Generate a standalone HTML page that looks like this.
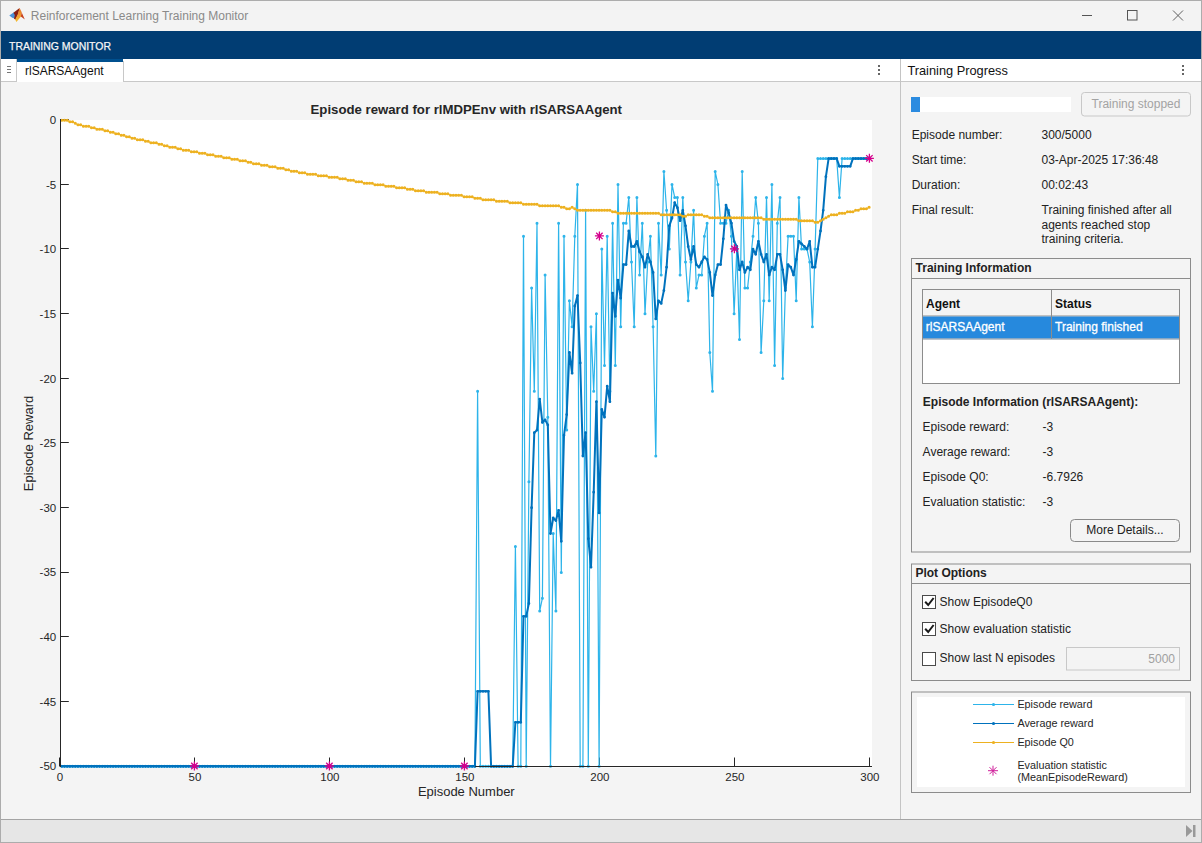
<!DOCTYPE html>
<html><head><meta charset="utf-8"><style>
html,body{margin:0;padding:0;width:1202px;height:843px;overflow:hidden;background:#f3f3f3}
svg{display:block;font-family:"Liberation Sans",sans-serif}
</style></head><body>
<svg width="1202" height="843" viewBox="0 0 1202 843">
<!-- window -->
<rect x="0" y="0" width="1202" height="843" fill="#f3f3f3"/>
<!-- title bar -->
<g id="logo">
<defs>
<linearGradient id="lgo" x1="0" y1="0" x2="0" y2="1"><stop offset="0" stop-color="#e06a20"/><stop offset="0.5" stop-color="#f09a35"/><stop offset="1" stop-color="#f5c030"/></linearGradient>
</defs>
<path d="M9.3 15.6 L13.6 12.6 L15.6 13.4 L14.6 18.4 L12.2 17.8 Z" fill="#4a90d8"/>
<path d="M13.4 12.8 L19.6 7.9 L18.2 14 L15.6 19.8 L14 18.8 L14.8 15 Z" fill="#8a1e14"/>
<path d="M19.6 7.9 L21.8 12.5 L21 16.4 L16.4 22 L15.2 19.6 L17.8 14.2 Z" fill="url(#lgo)"/>
<path d="M19.8 8 L24.8 19.6 L22.2 17.6 L20.8 16.4 L21.8 12.5 Z" fill="#c8401c"/>
</g>
<text x="30.8" y="19.8" font-size="12" fill="#8a8a8a">Reinforcement Learning Training Monitor</text>
<rect x="1082" y="15" width="10" height="1" fill="#555"/>
<rect x="1127.5" y="10.5" width="9.5" height="9.5" fill="none" stroke="#555" stroke-width="1"/>
<path d="M1173 10.5 L1183 20.5 M1183 10.5 L1173 20.5" stroke="#606060" stroke-width="1" fill="none"/>
<!-- header -->
<rect x="1" y="31" width="1200" height="28" fill="#013d73"/>
<text x="9" y="50" font-size="11" fill="#f6f6f6" stroke="#f6f6f6" stroke-width="0.25" textLength="102" lengthAdjust="spacingAndGlyphs">TRAINING MONITOR</text>
<!-- tab strip -->
<rect x="1" y="59" width="899" height="22" fill="#ffffff"/>
<rect x="1" y="81" width="899" height="1" fill="#c8c8c8"/>
<rect x="16" y="59" width="1" height="22" fill="#c8c8c8"/>
<rect x="7" y="66" width="4" height="1" fill="#777"/>
<rect x="7" y="69" width="4" height="1" fill="#777"/>
<rect x="7" y="72" width="4" height="1" fill="#777"/>
<rect x="17" y="59" width="106" height="3" fill="#00508f"/>
<rect x="17" y="62" width="106" height="20" fill="#ffffff"/>
<rect x="123" y="61" width="1" height="21" fill="#c8c8c8"/>
<text x="25" y="75" font-size="12" fill="#111">rlSARSAAgent</text>
<rect x="878" y="65" width="2" height="2" fill="#666"/>
<rect x="878" y="69" width="2" height="2" fill="#666"/>
<rect x="878" y="73" width="2" height="2" fill="#666"/>
<!-- doc area -->
<rect x="1" y="82" width="899" height="737" fill="#f4f4f4"/>
<rect x="900" y="59" width="1" height="760" fill="#c4c4c4"/>
<!-- right panel header -->
<rect x="901" y="59" width="300" height="22" fill="#ffffff"/>
<rect x="901" y="81" width="300" height="1" fill="#c8c8c8"/>
<text x="907.4" y="75" font-size="13" fill="#111" textLength="100.5" lengthAdjust="spacingAndGlyphs">Training Progress</text>
<rect x="1182" y="65" width="2" height="2" fill="#666"/>
<rect x="1182" y="69" width="2" height="2" fill="#666"/>
<rect x="1182" y="73" width="2" height="2" fill="#666"/>
<rect x="901" y="82" width="300" height="737" fill="#f4f4f4"/>
<!-- progress -->
<rect x="911" y="97" width="160" height="15" fill="#ffffff"/>
<rect x="911" y="97" width="9" height="15" fill="#2b8be0"/>
<rect x="1081.5" y="92.5" width="109" height="23.5" rx="3" fill="#f4f4f4" stroke="#c8c8c8"/>
<text x="1136" y="108" font-size="12" fill="#a3a3a3" text-anchor="middle">Training stopped</text>
<g font-size="12" fill="#222">
<text x="911.7" y="139">Episode number:</text><text x="1041.5" y="139">300/5000</text>
<text x="911.7" y="164">Start time:</text><text x="1041.5" y="164">03-Apr-2025 17:36:48</text>
<text x="911.7" y="189">Duration:</text><text x="1041.5" y="189">00:02:43</text>
<text x="911.7" y="214">Final result:</text><text x="1041.5" y="214">Training finished after all</text>
<text x="1041.5" y="228.5">agents reached stop</text>
<text x="1041.5" y="243">training criteria.</text>
</g>
<!-- Training information panel -->
<rect x="911.5" y="258.5" width="279" height="293.5" fill="none" stroke="#8c8c8c"/>
<rect x="912" y="278" width="278" height="1" fill="#8c8c8c"/>
<text x="915.6" y="272" font-size="12" font-weight="bold" fill="#222">Training Information</text>
<rect x="922.5" y="289.5" width="257" height="94" fill="#ffffff" stroke="#8c8c8c"/>
<rect x="923" y="290" width="256" height="26" fill="#f4f4f4"/>
<rect x="923" y="315.5" width="256" height="1" fill="#8c8c8c"/>
<rect x="923" y="316.5" width="256" height="22" fill="#2689dd"/>
<rect x="923" y="338.5" width="256" height="1" fill="#7a8a9a"/>
<rect x="1051" y="290" width="1" height="49" fill="#8c8c8c"/>
<text x="926" y="308" font-size="12" font-weight="bold" fill="#111">Agent</text>
<text x="1055" y="308" font-size="12" font-weight="bold" fill="#111">Status</text>
<text x="925.8" y="330.7" font-size="12" fill="#ffffff" stroke="#ffffff" stroke-width="0.3">rlSARSAAgent</text>
<text x="1055" y="330.7" font-size="12" fill="#ffffff" stroke="#ffffff" stroke-width="0.3">Training finished</text>
<text x="922.8" y="406" font-size="12" font-weight="bold" fill="#222">Episode Information (rlSARSAAgent):</text>
<g font-size="12" fill="#222">
<text x="922.6" y="431">Episode reward:</text><text x="1042.6" y="431">-3</text>
<text x="922.6" y="456">Average reward:</text><text x="1042.6" y="456">-3</text>
<text x="922.6" y="481">Episode Q0:</text><text x="1042.6" y="481">-6.7926</text>
<text x="922.6" y="506">Evaluation statistic:</text><text x="1042.6" y="506">-3</text>
</g>
<rect x="1070.5" y="519.5" width="109" height="22" rx="4" fill="#f4f4f4" stroke="#8a8a8a"/>
<text x="1125" y="534" font-size="12" fill="#222" text-anchor="middle">More Details...</text>
<!-- Plot options -->
<rect x="911.5" y="564" width="279" height="116.5" fill="none" stroke="#8c8c8c"/>
<rect x="912" y="583" width="278" height="1" fill="#8c8c8c"/>
<text x="915.4" y="577" font-size="12" font-weight="bold" fill="#222">Plot Options</text>
<rect x="922.5" y="595.5" width="13" height="13" fill="#ffffff" stroke="#4a4a4a"/>
<path d="M925.2 601.8 L928.2 605 L933.6 598" stroke="#1a1a1a" stroke-width="2" fill="none"/>
<text x="939.6" y="606" font-size="12" fill="#222">Show EpisodeQ0</text>
<rect x="922.5" y="622.5" width="13" height="13" fill="#ffffff" stroke="#4a4a4a"/>
<path d="M925.2 628.8 L928.2 632 L933.6 625" stroke="#1a1a1a" stroke-width="2" fill="none"/>
<text x="939.6" y="633" font-size="12" fill="#222">Show evaluation statistic</text>
<rect x="922.5" y="652.5" width="13" height="13" fill="#ffffff" stroke="#4a4a4a"/>
<text x="939.6" y="662" font-size="12" fill="#222">Show last N episodes</text>
<rect x="1066.5" y="647.5" width="113" height="22.5" fill="#f4f4f4" stroke="#c8c8c8"/>
<text x="1175" y="663" font-size="12" fill="#a0a0a0" text-anchor="end">5000</text>
<!-- legend panel -->
<rect x="911.5" y="692" width="279" height="100.5" fill="none" stroke="#8c8c8c"/>
<rect x="917" y="697" width="268" height="90" fill="#ffffff"/>
<rect x="973" y="704" width="41" height="1" fill="#2db4ea"/>
<circle cx="993.5" cy="704.5" r="1.6" fill="#2db4ea"/>
<rect x="973" y="723" width="41" height="1" fill="#0072bd"/>
<circle cx="993.5" cy="723.5" r="1.6" fill="#0072bd"/>
<rect x="973" y="742" width="41" height="1" fill="#edb120"/>
<circle cx="993.5" cy="742.5" r="1.6" fill="#edb120"/>
<g stroke="#d0209b" stroke-width="1" fill="none" transform="translate(993,770.7)">
<path d="M-5 0 H5 M0 -5 V5 M-3.5 -3.5 L3.5 3.5 M-3.5 3.5 L3.5 -3.5"/>
</g>
<g font-size="10.8" fill="#262626">
<text x="1017.4" y="708">Episode reward</text>
<text x="1017.4" y="727">Average reward</text>
<text x="1017.4" y="746">Episode Q0</text>
<text x="1017.4" y="769">Evaluation statistic</text>
<text x="1017.4" y="781">(MeanEpisodeReward)</text>
</g>
<rect x="60" y="120" width="812" height="647.5" fill="#ffffff"/>
<text x="466.3" y="114.2" font-size="13.2" font-weight="bold" fill="#262626" text-anchor="middle">Episode reward for rlMDPEnv with rlSARSAAgent</text>
<g stroke="#262626" stroke-width="1">
<path d="M60.5 119.5 H68.8"/>
<path d="M60.5 184.5 H68.8"/>
<path d="M60.5 248.5 H68.8"/>
<path d="M60.5 313.5 H68.8"/>
<path d="M60.5 378.5 H68.8"/>
<path d="M60.5 442.5 H68.8"/>
<path d="M60.5 507.5 H68.8"/>
<path d="M60.5 572.5 H68.8"/>
<path d="M60.5 636.5 H68.8"/>
<path d="M60.5 701.5 H68.8"/>
<path d="M60.5 766.5 H68.8"/>
<path d="M59.5 766.5 V757.5"/>
<path d="M194.5 766.5 V757.5"/>
<path d="M329.5 766.5 V757.5"/>
<path d="M464.5 766.5 V757.5"/>
<path d="M599.5 766.5 V757.5"/>
<path d="M734.5 766.5 V757.5"/>
<path d="M869.5 766.5 V757.5"/>
</g>
<g font-size="11.5" fill="#262626">
<text x="56.2" y="123.9" text-anchor="end">0</text>
<text x="56.2" y="188.6" text-anchor="end">-5</text>
<text x="56.2" y="253.2" text-anchor="end">-10</text>
<text x="56.2" y="317.8" text-anchor="end">-15</text>
<text x="56.2" y="382.5" text-anchor="end">-20</text>
<text x="56.2" y="447.1" text-anchor="end">-25</text>
<text x="56.2" y="511.8" text-anchor="end">-30</text>
<text x="56.2" y="576.4" text-anchor="end">-35</text>
<text x="56.2" y="641.1" text-anchor="end">-40</text>
<text x="56.2" y="705.8" text-anchor="end">-45</text>
<text x="56.2" y="770.4" text-anchor="end">-50</text>
<text x="59.9" y="780.8" text-anchor="middle">0</text>
<text x="194.9" y="780.8" text-anchor="middle">50</text>
<text x="329.9" y="780.8" text-anchor="middle">100</text>
<text x="464.9" y="780.8" text-anchor="middle">150</text>
<text x="599.9" y="780.8" text-anchor="middle">200</text>
<text x="734.9" y="780.8" text-anchor="middle">250</text>
<text x="869.9" y="780.8" text-anchor="middle">300</text>
</g>
<text x="466.3" y="796" font-size="13" fill="#262626" text-anchor="middle">Episode Number</text>
<text transform="translate(33,443.5) rotate(-90)" x="0" y="0" font-size="13" fill="#262626" text-anchor="middle">Episode Reward</text>
<defs><clipPath id="pc"><rect x="60" y="117" width="814" height="653"/></clipPath></defs>
<g clip-path="url(#pc)">
<polyline points="61.8,766.3 64.5,766.3 67.2,766.3 69.9,766.3 72.6,766.3 75.3,766.3 78,766.3 80.7,766.3 83.4,766.3 86.1,766.3 88.8,766.3 91.5,766.3 94.2,766.3 96.9,766.3 99.6,766.3 102.3,766.3 105,766.3 107.7,766.3 110.4,766.3 113.1,766.3 115.8,766.3 118.5,766.3 121.2,766.3 123.9,766.3 126.6,766.3 129.3,766.3 132,766.3 134.7,766.3 137.4,766.3 140.1,766.3 142.8,766.3 145.5,766.3 148.2,766.3 150.9,766.3 153.6,766.3 156.3,766.3 159,766.3 161.7,766.3 164.4,766.3 167.1,766.3 169.8,766.3 172.5,766.3 175.2,766.3 177.9,766.3 180.6,766.3 183.3,766.3 186,766.3 188.7,766.3 191.4,766.3 194.1,766.3 196.8,766.3 199.5,766.3 202.2,766.3 204.9,766.3 207.6,766.3 210.3,766.3 213,766.3 215.7,766.3 218.4,766.3 221.1,766.3 223.8,766.3 226.5,766.3 229.2,766.3 231.9,766.3 234.6,766.3 237.3,766.3 240,766.3 242.7,766.3 245.4,766.3 248.1,766.3 250.8,766.3 253.5,766.3 256.2,766.3 258.9,766.3 261.6,766.3 264.3,766.3 267,766.3 269.7,766.3 272.4,766.3 275.1,766.3 277.8,766.3 280.5,766.3 283.2,766.3 285.9,766.3 288.6,766.3 291.3,766.3 294,766.3 296.7,766.3 299.4,766.3 302.1,766.3 304.8,766.3 307.5,766.3 310.2,766.3 312.9,766.3 315.6,766.3 318.3,766.3 321,766.3 323.7,766.3 326.4,766.3 329.1,766.3 331.8,766.3 334.5,766.3 337.2,766.3 339.9,766.3 342.6,766.3 345.3,766.3 348,766.3 350.7,766.3 353.4,766.3 356.1,766.3 358.8,766.3 361.5,766.3 364.2,766.3 366.9,766.3 369.6,766.3 372.3,766.3 375,766.3 377.7,766.3 380.4,766.3 383.1,766.3 385.8,766.3 388.5,766.3 391.2,766.3 393.9,766.3 396.6,766.3 399.3,766.3 402,766.3 404.7,766.3 407.4,766.3 410.1,766.3 412.8,766.3 415.5,766.3 418.2,766.3 420.9,766.3 423.6,766.3 426.3,766.3 429,766.3 431.7,766.3 434.4,766.3 437.1,766.3 439.8,766.3 442.5,766.3 445.2,766.3 447.9,766.3 450.6,766.3 453.3,766.3 456,766.3 458.7,766.3 461.4,766.3 464.1,766.3 466.8,766.3 469.5,766.3 472.2,766.3 474.9,766.3 477.6,391.3 480.3,766.3 483,766.3 485.7,766.3 488.4,766.3 491.1,766.3 493.8,766.3 496.5,766.3 499.2,766.3 501.9,766.3 504.6,766.3 507.3,766.3 510,766.3 512.7,766.3 515.4,546.5 518.1,766.3 520.8,766.3 523.5,236.2 526.2,766.3 528.9,481.8 531.6,287.9 534.3,391.3 537,223.2 539.7,611.1 542.4,598.2 545.1,275 547.8,417.2 550.5,766.3 553.2,533.6 555.9,611.1 558.6,223.2 561.3,572.4 564,236.2 566.7,430.1 569.4,300.8 572.1,326.7 574.8,236.2 577.5,184.4 580.2,766.3 582.9,766.3 585.6,210.3 588.3,766.3 591,326.7 593.7,391.3 596.4,313.8 599.1,766.3 601.8,249.1 604.5,365.5 607.2,236.2 609.9,391.3 612.6,223.2 615.3,365.5 618,184.4 620.7,326.7 623.4,223.2 626.1,223.2 628.8,197.4 631.5,262 634.2,326.7 636.9,197.4 639.6,275 642.3,223.2 645,313.8 647.7,262 650.4,236.2 653.1,326.7 655.8,456 658.5,223.2 661.2,275 663.9,171.5 666.6,210.3 669.3,249.1 672,184.4 674.7,197.4 677.4,197.4 680.1,275 682.8,197.4 685.5,262 688.2,300.8 690.9,262 693.6,210.3 696.3,287.9 699,275 701.7,275 704.4,236.2 707.1,223.2 709.8,352.5 712.5,391.3 715.2,171.5 717.9,184.4 720.6,223.2 723.3,223.2 726,223.2 728.7,210.3 731.4,236.2 734.1,313.8 736.8,249.1 739.5,339.6 742.2,171.5 744.9,287.9 747.6,287.9 750.3,262 753,236.2 755.7,197.4 758.4,223.2 761.1,352.5 763.8,300.8 766.5,197.4 769.2,300.8 771.9,184.4 774.6,365.5 777.3,223.2 780,197.4 782.7,378.4 785.4,287.9 788.1,236.2 790.8,236.2 793.5,236.2 796.2,300.8 798.9,197.4 801.6,249.1 804.3,249.1 807,249.1 809.7,262 812.4,326.7 815.1,249.1 817.8,158.6 820.5,158.6 823.2,158.6 825.9,158.6 828.6,158.6 831.3,158.6 834,158.6 836.7,158.6 839.4,197.4 842.1,158.6 844.8,158.6 847.5,158.6 850.2,158.6 852.9,158.6 855.6,158.6 858.3,158.6 861,158.6 863.7,158.6 866.4,158.6 869.1,158.6" fill="none" stroke="#2db4ea" stroke-width="1.2" stroke-linejoin="round"/>
<path d="M61.8 766.3h0M64.5 766.3h0M67.2 766.3h0M69.9 766.3h0M72.6 766.3h0M75.3 766.3h0M78 766.3h0M80.7 766.3h0M83.4 766.3h0M86.1 766.3h0M88.8 766.3h0M91.5 766.3h0M94.2 766.3h0M96.9 766.3h0M99.6 766.3h0M102.3 766.3h0M105 766.3h0M107.7 766.3h0M110.4 766.3h0M113.1 766.3h0M115.8 766.3h0M118.5 766.3h0M121.2 766.3h0M123.9 766.3h0M126.6 766.3h0M129.3 766.3h0M132 766.3h0M134.7 766.3h0M137.4 766.3h0M140.1 766.3h0M142.8 766.3h0M145.5 766.3h0M148.2 766.3h0M150.9 766.3h0M153.6 766.3h0M156.3 766.3h0M159 766.3h0M161.7 766.3h0M164.4 766.3h0M167.1 766.3h0M169.8 766.3h0M172.5 766.3h0M175.2 766.3h0M177.9 766.3h0M180.6 766.3h0M183.3 766.3h0M186 766.3h0M188.7 766.3h0M191.4 766.3h0M194.1 766.3h0M196.8 766.3h0M199.5 766.3h0M202.2 766.3h0M204.9 766.3h0M207.6 766.3h0M210.3 766.3h0M213 766.3h0M215.7 766.3h0M218.4 766.3h0M221.1 766.3h0M223.8 766.3h0M226.5 766.3h0M229.2 766.3h0M231.9 766.3h0M234.6 766.3h0M237.3 766.3h0M240 766.3h0M242.7 766.3h0M245.4 766.3h0M248.1 766.3h0M250.8 766.3h0M253.5 766.3h0M256.2 766.3h0M258.9 766.3h0M261.6 766.3h0M264.3 766.3h0M267 766.3h0M269.7 766.3h0M272.4 766.3h0M275.1 766.3h0M277.8 766.3h0M280.5 766.3h0M283.2 766.3h0M285.9 766.3h0M288.6 766.3h0M291.3 766.3h0M294 766.3h0M296.7 766.3h0M299.4 766.3h0M302.1 766.3h0M304.8 766.3h0M307.5 766.3h0M310.2 766.3h0M312.9 766.3h0M315.6 766.3h0M318.3 766.3h0M321 766.3h0M323.7 766.3h0M326.4 766.3h0M329.1 766.3h0M331.8 766.3h0M334.5 766.3h0M337.2 766.3h0M339.9 766.3h0M342.6 766.3h0M345.3 766.3h0M348 766.3h0M350.7 766.3h0M353.4 766.3h0M356.1 766.3h0M358.8 766.3h0M361.5 766.3h0M364.2 766.3h0M366.9 766.3h0M369.6 766.3h0M372.3 766.3h0M375 766.3h0M377.7 766.3h0M380.4 766.3h0M383.1 766.3h0M385.8 766.3h0M388.5 766.3h0M391.2 766.3h0M393.9 766.3h0M396.6 766.3h0M399.3 766.3h0M402 766.3h0M404.7 766.3h0M407.4 766.3h0M410.1 766.3h0M412.8 766.3h0M415.5 766.3h0M418.2 766.3h0M420.9 766.3h0M423.6 766.3h0M426.3 766.3h0M429 766.3h0M431.7 766.3h0M434.4 766.3h0M437.1 766.3h0M439.8 766.3h0M442.5 766.3h0M445.2 766.3h0M447.9 766.3h0M450.6 766.3h0M453.3 766.3h0M456 766.3h0M458.7 766.3h0M461.4 766.3h0M464.1 766.3h0M466.8 766.3h0M469.5 766.3h0M472.2 766.3h0M474.9 766.3h0M477.6 391.3h0M480.3 766.3h0M483 766.3h0M485.7 766.3h0M488.4 766.3h0M491.1 766.3h0M493.8 766.3h0M496.5 766.3h0M499.2 766.3h0M501.9 766.3h0M504.6 766.3h0M507.3 766.3h0M510 766.3h0M512.7 766.3h0M515.4 546.5h0M518.1 766.3h0M520.8 766.3h0M523.5 236.2h0M526.2 766.3h0M528.9 481.8h0M531.6 287.9h0M534.3 391.3h0M537 223.2h0M539.7 611.1h0M542.4 598.2h0M545.1 275h0M547.8 417.2h0M550.5 766.3h0M553.2 533.6h0M555.9 611.1h0M558.6 223.2h0M561.3 572.4h0M564 236.2h0M566.7 430.1h0M569.4 300.8h0M572.1 326.7h0M574.8 236.2h0M577.5 184.4h0M580.2 766.3h0M582.9 766.3h0M585.6 210.3h0M588.3 766.3h0M591 326.7h0M593.7 391.3h0M596.4 313.8h0M599.1 766.3h0M601.8 249.1h0M604.5 365.5h0M607.2 236.2h0M609.9 391.3h0M612.6 223.2h0M615.3 365.5h0M618 184.4h0M620.7 326.7h0M623.4 223.2h0M626.1 223.2h0M628.8 197.4h0M631.5 262h0M634.2 326.7h0M636.9 197.4h0M639.6 275h0M642.3 223.2h0M645 313.8h0M647.7 262h0M650.4 236.2h0M653.1 326.7h0M655.8 456h0M658.5 223.2h0M661.2 275h0M663.9 171.5h0M666.6 210.3h0M669.3 249.1h0M672 184.4h0M674.7 197.4h0M677.4 197.4h0M680.1 275h0M682.8 197.4h0M685.5 262h0M688.2 300.8h0M690.9 262h0M693.6 210.3h0M696.3 287.9h0M699 275h0M701.7 275h0M704.4 236.2h0M707.1 223.2h0M709.8 352.5h0M712.5 391.3h0M715.2 171.5h0M717.9 184.4h0M720.6 223.2h0M723.3 223.2h0M726 223.2h0M728.7 210.3h0M731.4 236.2h0M734.1 313.8h0M736.8 249.1h0M739.5 339.6h0M742.2 171.5h0M744.9 287.9h0M747.6 287.9h0M750.3 262h0M753 236.2h0M755.7 197.4h0M758.4 223.2h0M761.1 352.5h0M763.8 300.8h0M766.5 197.4h0M769.2 300.8h0M771.9 184.4h0M774.6 365.5h0M777.3 223.2h0M780 197.4h0M782.7 378.4h0M785.4 287.9h0M788.1 236.2h0M790.8 236.2h0M793.5 236.2h0M796.2 300.8h0M798.9 197.4h0M801.6 249.1h0M804.3 249.1h0M807 249.1h0M809.7 262h0M812.4 326.7h0M815.1 249.1h0M817.8 158.6h0M820.5 158.6h0M823.2 158.6h0M825.9 158.6h0M828.6 158.6h0M831.3 158.6h0M834 158.6h0M836.7 158.6h0M839.4 197.4h0M842.1 158.6h0M844.8 158.6h0M847.5 158.6h0M850.2 158.6h0M852.9 158.6h0M855.6 158.6h0M858.3 158.6h0M861 158.6h0M863.7 158.6h0M866.4 158.6h0M869.1 158.6h0" stroke="#2db4ea" stroke-width="3" stroke-linecap="round"/>
<polyline points="61.8,766.3 64.5,766.3 67.2,766.3 69.9,766.3 72.6,766.3 75.3,766.3 78,766.3 80.7,766.3 83.4,766.3 86.1,766.3 88.8,766.3 91.5,766.3 94.2,766.3 96.9,766.3 99.6,766.3 102.3,766.3 105,766.3 107.7,766.3 110.4,766.3 113.1,766.3 115.8,766.3 118.5,766.3 121.2,766.3 123.9,766.3 126.6,766.3 129.3,766.3 132,766.3 134.7,766.3 137.4,766.3 140.1,766.3 142.8,766.3 145.5,766.3 148.2,766.3 150.9,766.3 153.6,766.3 156.3,766.3 159,766.3 161.7,766.3 164.4,766.3 167.1,766.3 169.8,766.3 172.5,766.3 175.2,766.3 177.9,766.3 180.6,766.3 183.3,766.3 186,766.3 188.7,766.3 191.4,766.3 194.1,766.3 196.8,766.3 199.5,766.3 202.2,766.3 204.9,766.3 207.6,766.3 210.3,766.3 213,766.3 215.7,766.3 218.4,766.3 221.1,766.3 223.8,766.3 226.5,766.3 229.2,766.3 231.9,766.3 234.6,766.3 237.3,766.3 240,766.3 242.7,766.3 245.4,766.3 248.1,766.3 250.8,766.3 253.5,766.3 256.2,766.3 258.9,766.3 261.6,766.3 264.3,766.3 267,766.3 269.7,766.3 272.4,766.3 275.1,766.3 277.8,766.3 280.5,766.3 283.2,766.3 285.9,766.3 288.6,766.3 291.3,766.3 294,766.3 296.7,766.3 299.4,766.3 302.1,766.3 304.8,766.3 307.5,766.3 310.2,766.3 312.9,766.3 315.6,766.3 318.3,766.3 321,766.3 323.7,766.3 326.4,766.3 329.1,766.3 331.8,766.3 334.5,766.3 337.2,766.3 339.9,766.3 342.6,766.3 345.3,766.3 348,766.3 350.7,766.3 353.4,766.3 356.1,766.3 358.8,766.3 361.5,766.3 364.2,766.3 366.9,766.3 369.6,766.3 372.3,766.3 375,766.3 377.7,766.3 380.4,766.3 383.1,766.3 385.8,766.3 388.5,766.3 391.2,766.3 393.9,766.3 396.6,766.3 399.3,766.3 402,766.3 404.7,766.3 407.4,766.3 410.1,766.3 412.8,766.3 415.5,766.3 418.2,766.3 420.9,766.3 423.6,766.3 426.3,766.3 429,766.3 431.7,766.3 434.4,766.3 437.1,766.3 439.8,766.3 442.5,766.3 445.2,766.3 447.9,766.3 450.6,766.3 453.3,766.3 456,766.3 458.7,766.3 461.4,766.3 464.1,766.3 466.8,766.3 469.5,766.3 472.2,766.3 474.9,766.3 477.6,691.3 480.3,691.3 483,691.3 485.7,691.3 488.4,691.3 491.1,766.3 493.8,766.3 496.5,766.3 499.2,766.3 501.9,766.3 504.6,766.3 507.3,766.3 510,766.3 512.7,766.3 515.4,722.3 518.1,722.3 520.8,722.3 523.5,616.3 526.2,616.3 528.9,603.4 531.6,507.7 534.3,432.7 537,430.1 539.7,399.1 542.4,422.4 545.1,419.8 547.8,424.9 550.5,533.6 553.2,518 555.9,520.6 558.6,510.3 561.3,541.3 564,435.3 566.7,414.6 569.4,352.5 572.1,373.2 574.8,306 577.5,295.6 580.2,362.9 582.9,456 585.6,432.7 588.3,538.7 591,567.2 593.7,492.2 596.4,401.7 599.1,512.9 601.8,409.4 604.5,417.2 607.2,386.2 609.9,401.7 612.6,293.1 615.3,316.3 618,280.1 620.7,298.2 623.4,264.6 626.1,264.6 628.8,231 631.5,246.5 634.2,246.5 636.9,241.3 639.6,251.7 642.3,256.9 645,267.2 647.7,254.3 650.4,262 653.1,272.4 655.8,318.9 658.5,300.8 661.2,303.4 663.9,290.5 666.6,267.2 669.3,225.8 672,218.1 674.7,202.6 677.4,207.7 680.1,220.7 682.8,210.3 685.5,225.8 688.2,246.5 690.9,259.4 693.6,246.5 696.3,264.6 699,267.2 701.7,262 704.4,256.9 707.1,259.4 709.8,272.4 712.5,295.6 715.2,275 717.9,264.6 720.6,264.6 723.3,238.8 726,205.1 728.7,212.9 731.4,223.2 734.1,241.3 736.8,246.5 739.5,269.8 742.2,262 744.9,272.4 747.6,267.2 750.3,269.8 753,249.1 755.7,254.3 758.4,241.3 761.1,254.3 763.8,262 766.5,254.3 769.2,275 771.9,267.2 774.6,269.8 777.3,254.3 780,254.3 782.7,269.8 785.4,290.5 788.1,264.6 790.8,267.2 793.5,275 796.2,259.4 798.9,241.3 801.6,243.9 804.3,246.5 807,249.1 809.7,241.3 812.4,267.2 815.1,267.2 817.8,249.1 820.5,231 823.2,210.3 825.9,176.7 828.6,158.6 831.3,158.6 834,158.6 836.7,158.6 839.4,166.3 842.1,166.3 844.8,166.3 847.5,166.3 850.2,166.3 852.9,158.6 855.6,158.6 858.3,158.6 861,158.6 863.7,158.6 866.4,158.6 869.1,158.6" fill="none" stroke="#0072bd" stroke-width="2" stroke-linejoin="round"/>
<path d="M61.8 766.3h0M64.5 766.3h0M67.2 766.3h0M69.9 766.3h0M72.6 766.3h0M75.3 766.3h0M78 766.3h0M80.7 766.3h0M83.4 766.3h0M86.1 766.3h0M88.8 766.3h0M91.5 766.3h0M94.2 766.3h0M96.9 766.3h0M99.6 766.3h0M102.3 766.3h0M105 766.3h0M107.7 766.3h0M110.4 766.3h0M113.1 766.3h0M115.8 766.3h0M118.5 766.3h0M121.2 766.3h0M123.9 766.3h0M126.6 766.3h0M129.3 766.3h0M132 766.3h0M134.7 766.3h0M137.4 766.3h0M140.1 766.3h0M142.8 766.3h0M145.5 766.3h0M148.2 766.3h0M150.9 766.3h0M153.6 766.3h0M156.3 766.3h0M159 766.3h0M161.7 766.3h0M164.4 766.3h0M167.1 766.3h0M169.8 766.3h0M172.5 766.3h0M175.2 766.3h0M177.9 766.3h0M180.6 766.3h0M183.3 766.3h0M186 766.3h0M188.7 766.3h0M191.4 766.3h0M194.1 766.3h0M196.8 766.3h0M199.5 766.3h0M202.2 766.3h0M204.9 766.3h0M207.6 766.3h0M210.3 766.3h0M213 766.3h0M215.7 766.3h0M218.4 766.3h0M221.1 766.3h0M223.8 766.3h0M226.5 766.3h0M229.2 766.3h0M231.9 766.3h0M234.6 766.3h0M237.3 766.3h0M240 766.3h0M242.7 766.3h0M245.4 766.3h0M248.1 766.3h0M250.8 766.3h0M253.5 766.3h0M256.2 766.3h0M258.9 766.3h0M261.6 766.3h0M264.3 766.3h0M267 766.3h0M269.7 766.3h0M272.4 766.3h0M275.1 766.3h0M277.8 766.3h0M280.5 766.3h0M283.2 766.3h0M285.9 766.3h0M288.6 766.3h0M291.3 766.3h0M294 766.3h0M296.7 766.3h0M299.4 766.3h0M302.1 766.3h0M304.8 766.3h0M307.5 766.3h0M310.2 766.3h0M312.9 766.3h0M315.6 766.3h0M318.3 766.3h0M321 766.3h0M323.7 766.3h0M326.4 766.3h0M329.1 766.3h0M331.8 766.3h0M334.5 766.3h0M337.2 766.3h0M339.9 766.3h0M342.6 766.3h0M345.3 766.3h0M348 766.3h0M350.7 766.3h0M353.4 766.3h0M356.1 766.3h0M358.8 766.3h0M361.5 766.3h0M364.2 766.3h0M366.9 766.3h0M369.6 766.3h0M372.3 766.3h0M375 766.3h0M377.7 766.3h0M380.4 766.3h0M383.1 766.3h0M385.8 766.3h0M388.5 766.3h0M391.2 766.3h0M393.9 766.3h0M396.6 766.3h0M399.3 766.3h0M402 766.3h0M404.7 766.3h0M407.4 766.3h0M410.1 766.3h0M412.8 766.3h0M415.5 766.3h0M418.2 766.3h0M420.9 766.3h0M423.6 766.3h0M426.3 766.3h0M429 766.3h0M431.7 766.3h0M434.4 766.3h0M437.1 766.3h0M439.8 766.3h0M442.5 766.3h0M445.2 766.3h0M447.9 766.3h0M450.6 766.3h0M453.3 766.3h0M456 766.3h0M458.7 766.3h0M461.4 766.3h0M464.1 766.3h0M466.8 766.3h0M469.5 766.3h0M472.2 766.3h0M474.9 766.3h0M477.6 691.3h0M480.3 691.3h0M483 691.3h0M485.7 691.3h0M488.4 691.3h0M491.1 766.3h0M493.8 766.3h0M496.5 766.3h0M499.2 766.3h0M501.9 766.3h0M504.6 766.3h0M507.3 766.3h0M510 766.3h0M512.7 766.3h0M515.4 722.3h0M518.1 722.3h0M520.8 722.3h0M523.5 616.3h0M526.2 616.3h0M528.9 603.4h0M531.6 507.7h0M534.3 432.7h0M537 430.1h0M539.7 399.1h0M542.4 422.4h0M545.1 419.8h0M547.8 424.9h0M550.5 533.6h0M553.2 518h0M555.9 520.6h0M558.6 510.3h0M561.3 541.3h0M564 435.3h0M566.7 414.6h0M569.4 352.5h0M572.1 373.2h0M574.8 306h0M577.5 295.6h0M580.2 362.9h0M582.9 456h0M585.6 432.7h0M588.3 538.7h0M591 567.2h0M593.7 492.2h0M596.4 401.7h0M599.1 512.9h0M601.8 409.4h0M604.5 417.2h0M607.2 386.2h0M609.9 401.7h0M612.6 293.1h0M615.3 316.3h0M618 280.1h0M620.7 298.2h0M623.4 264.6h0M626.1 264.6h0M628.8 231h0M631.5 246.5h0M634.2 246.5h0M636.9 241.3h0M639.6 251.7h0M642.3 256.9h0M645 267.2h0M647.7 254.3h0M650.4 262h0M653.1 272.4h0M655.8 318.9h0M658.5 300.8h0M661.2 303.4h0M663.9 290.5h0M666.6 267.2h0M669.3 225.8h0M672 218.1h0M674.7 202.6h0M677.4 207.7h0M680.1 220.7h0M682.8 210.3h0M685.5 225.8h0M688.2 246.5h0M690.9 259.4h0M693.6 246.5h0M696.3 264.6h0M699 267.2h0M701.7 262h0M704.4 256.9h0M707.1 259.4h0M709.8 272.4h0M712.5 295.6h0M715.2 275h0M717.9 264.6h0M720.6 264.6h0M723.3 238.8h0M726 205.1h0M728.7 212.9h0M731.4 223.2h0M734.1 241.3h0M736.8 246.5h0M739.5 269.8h0M742.2 262h0M744.9 272.4h0M747.6 267.2h0M750.3 269.8h0M753 249.1h0M755.7 254.3h0M758.4 241.3h0M761.1 254.3h0M763.8 262h0M766.5 254.3h0M769.2 275h0M771.9 267.2h0M774.6 269.8h0M777.3 254.3h0M780 254.3h0M782.7 269.8h0M785.4 290.5h0M788.1 264.6h0M790.8 267.2h0M793.5 275h0M796.2 259.4h0M798.9 241.3h0M801.6 243.9h0M804.3 246.5h0M807 249.1h0M809.7 241.3h0M812.4 267.2h0M815.1 267.2h0M817.8 249.1h0M820.5 231h0M823.2 210.3h0M825.9 176.7h0M828.6 158.6h0M831.3 158.6h0M834 158.6h0M836.7 158.6h0M839.4 166.3h0M842.1 166.3h0M844.8 166.3h0M847.5 166.3h0M850.2 166.3h0M852.9 158.6h0M855.6 158.6h0M858.3 158.6h0M861 158.6h0M863.7 158.6h0M866.4 158.6h0M869.1 158.6h0" stroke="#0072bd" stroke-width="2.8" stroke-linecap="round"/>
<polyline points="61.8,120.3 64.5,120.3 67.2,120.3 69.9,121.8 72.6,121.8 75.3,123.3 78,124.8 80.7,124.8 83.4,126.3 86.1,126.3 88.8,126.3 91.5,127.8 94.2,127.8 96.9,129.3 99.6,129.3 102.3,129.3 105,130.8 107.7,130.8 110.4,132.3 113.1,132.3 115.8,133.8 118.5,133.8 121.2,135.3 123.9,135.3 126.6,136.8 129.3,136.8 132,138.3 134.7,138.3 137.4,139.8 140.1,139.8 142.8,139.8 145.5,141.3 148.2,141.3 150.9,142.8 153.6,142.8 156.3,142.8 159,144.3 161.7,144.3 164.4,145.8 167.1,145.8 169.8,147.3 172.5,147.3 175.2,147.3 177.9,148.8 180.6,148.8 183.3,150.3 186,150.3 188.7,150.3 191.4,151.8 194.1,151.8 196.8,151.8 199.5,153.3 202.2,153.3 204.9,153.3 207.6,154.8 210.3,154.8 213,154.8 215.7,156.3 218.4,156.3 221.1,156.3 223.8,157.8 226.5,157.8 229.2,157.8 231.9,159.3 234.6,159.3 237.3,159.3 240,160.8 242.7,160.8 245.4,160.8 248.1,162.3 250.8,162.3 253.5,163.8 256.2,163.8 258.9,163.8 261.6,165.3 264.3,165.3 267,165.3 269.7,166.8 272.4,166.8 275.1,166.8 277.8,168.3 280.5,168.3 283.2,168.3 285.9,169.8 288.6,169.8 291.3,171.3 294,171.3 296.7,171.3 299.4,172.8 302.1,172.8 304.8,172.8 307.5,174.3 310.2,174.3 312.9,174.3 315.6,174.3 318.3,175.8 321,175.8 323.7,175.8 326.4,175.8 329.1,177.3 331.8,177.3 334.5,177.3 337.2,177.3 339.9,178.8 342.6,178.8 345.3,178.8 348,180.3 350.7,180.3 353.4,180.3 356.1,181.8 358.8,181.8 361.5,181.8 364.2,183.3 366.9,183.3 369.6,183.3 372.3,183.3 375,184.8 377.7,184.8 380.4,184.8 383.1,184.8 385.8,186.3 388.5,186.3 391.2,186.3 393.9,186.3 396.6,187.8 399.3,187.8 402,187.8 404.7,187.8 407.4,189.3 410.1,189.3 412.8,189.3 415.5,190.8 418.2,190.8 420.9,190.8 423.6,190.8 426.3,192.3 429,192.3 431.7,192.3 434.4,192.3 437.1,192.3 439.8,193.8 442.5,193.8 445.2,193.8 447.9,193.8 450.6,195.3 453.3,195.3 456,195.3 458.7,195.3 461.4,195.3 464.1,196.8 466.8,196.8 469.5,196.8 472.2,196.8 474.9,198.3 477.6,198.3 480.3,198.3 483,199.8 485.7,199.8 488.4,199.8 491.1,199.8 493.8,199.8 496.5,201.3 499.2,201.3 501.9,201.3 504.6,201.3 507.3,201.3 510,202.8 512.7,202.8 515.4,202.8 518.1,202.8 520.8,202.8 523.5,204.3 526.2,204.3 528.9,204.3 531.6,204.3 534.3,204.3 537,204.3 539.7,205.8 542.4,205.8 545.1,205.8 547.8,205.8 550.5,205.8 553.2,205.8 555.9,205.8 558.6,205.8 561.3,207.3 564,207.3 566.7,208.8 569.4,208.8 572.1,207.3 574.8,208.8 577.5,210.3 580.2,210.3 582.9,210.3 585.6,210.3 588.3,210.3 591,210.3 593.7,210.3 596.4,210.3 599.1,210.3 601.8,210.3 604.5,210.3 607.2,210.3 609.9,210.3 612.6,211.8 615.3,211.8 618,213.3 620.7,213.3 623.4,213.3 626.1,213.3 628.8,213.3 631.5,213.3 634.2,213.3 636.9,213.3 639.6,213.3 642.3,213.3 645,213.3 647.7,213.3 650.4,213.3 653.1,213.3 655.8,213.3 658.5,213.3 661.2,214.8 663.9,214.8 666.6,214.8 669.3,214.8 672,214.8 674.7,214.8 677.4,214.8 680.1,214.8 682.8,216.3 685.5,216.3 688.2,214.8 690.9,214.8 693.6,214.8 696.3,214.8 699,214.8 701.7,214.8 704.4,216.3 707.1,216.3 709.8,217.8 712.5,217.8 715.2,217.8 717.9,217.8 720.6,217.8 723.3,217.8 726,217.8 728.7,217.8 731.4,217.8 734.1,217.8 736.8,217.8 739.5,217.8 742.2,217.8 744.9,217.8 747.6,217.8 750.3,217.8 753,217.8 755.7,217.8 758.4,217.8 761.1,217.8 763.8,219.3 766.5,219.3 769.2,219.3 771.9,219.3 774.6,219.3 777.3,219.3 780,219.3 782.7,219.3 785.4,219.3 788.1,219.3 790.8,219.3 793.5,219.3 796.2,219.3 798.9,220.8 801.6,220.8 804.3,220.8 807,220.8 809.7,220.8 812.4,220.8 815.1,222.3 817.8,222.3 820.5,220.8 823.2,219.3 825.9,217.8 828.6,216.3 831.3,214.8 834,214.8 836.7,214.8 839.4,213.3 842.1,213.3 844.8,213.3 847.5,211.8 850.2,211.8 852.9,211.8 855.6,210.3 858.3,210.3 861,208.8 863.7,208.8 866.4,208.8 869.1,207.3" fill="none" stroke="#edb120" stroke-width="0.9" stroke-linejoin="round"/>
<path d="M61.8 120.3h0M64.5 120.3h0M67.2 120.3h0M69.9 121.8h0M72.6 121.8h0M75.3 123.3h0M78 124.8h0M80.7 124.8h0M83.4 126.3h0M86.1 126.3h0M88.8 126.3h0M91.5 127.8h0M94.2 127.8h0M96.9 129.3h0M99.6 129.3h0M102.3 129.3h0M105 130.8h0M107.7 130.8h0M110.4 132.3h0M113.1 132.3h0M115.8 133.8h0M118.5 133.8h0M121.2 135.3h0M123.9 135.3h0M126.6 136.8h0M129.3 136.8h0M132 138.3h0M134.7 138.3h0M137.4 139.8h0M140.1 139.8h0M142.8 139.8h0M145.5 141.3h0M148.2 141.3h0M150.9 142.8h0M153.6 142.8h0M156.3 142.8h0M159 144.3h0M161.7 144.3h0M164.4 145.8h0M167.1 145.8h0M169.8 147.3h0M172.5 147.3h0M175.2 147.3h0M177.9 148.8h0M180.6 148.8h0M183.3 150.3h0M186 150.3h0M188.7 150.3h0M191.4 151.8h0M194.1 151.8h0M196.8 151.8h0M199.5 153.3h0M202.2 153.3h0M204.9 153.3h0M207.6 154.8h0M210.3 154.8h0M213 154.8h0M215.7 156.3h0M218.4 156.3h0M221.1 156.3h0M223.8 157.8h0M226.5 157.8h0M229.2 157.8h0M231.9 159.3h0M234.6 159.3h0M237.3 159.3h0M240 160.8h0M242.7 160.8h0M245.4 160.8h0M248.1 162.3h0M250.8 162.3h0M253.5 163.8h0M256.2 163.8h0M258.9 163.8h0M261.6 165.3h0M264.3 165.3h0M267 165.3h0M269.7 166.8h0M272.4 166.8h0M275.1 166.8h0M277.8 168.3h0M280.5 168.3h0M283.2 168.3h0M285.9 169.8h0M288.6 169.8h0M291.3 171.3h0M294 171.3h0M296.7 171.3h0M299.4 172.8h0M302.1 172.8h0M304.8 172.8h0M307.5 174.3h0M310.2 174.3h0M312.9 174.3h0M315.6 174.3h0M318.3 175.8h0M321 175.8h0M323.7 175.8h0M326.4 175.8h0M329.1 177.3h0M331.8 177.3h0M334.5 177.3h0M337.2 177.3h0M339.9 178.8h0M342.6 178.8h0M345.3 178.8h0M348 180.3h0M350.7 180.3h0M353.4 180.3h0M356.1 181.8h0M358.8 181.8h0M361.5 181.8h0M364.2 183.3h0M366.9 183.3h0M369.6 183.3h0M372.3 183.3h0M375 184.8h0M377.7 184.8h0M380.4 184.8h0M383.1 184.8h0M385.8 186.3h0M388.5 186.3h0M391.2 186.3h0M393.9 186.3h0M396.6 187.8h0M399.3 187.8h0M402 187.8h0M404.7 187.8h0M407.4 189.3h0M410.1 189.3h0M412.8 189.3h0M415.5 190.8h0M418.2 190.8h0M420.9 190.8h0M423.6 190.8h0M426.3 192.3h0M429 192.3h0M431.7 192.3h0M434.4 192.3h0M437.1 192.3h0M439.8 193.8h0M442.5 193.8h0M445.2 193.8h0M447.9 193.8h0M450.6 195.3h0M453.3 195.3h0M456 195.3h0M458.7 195.3h0M461.4 195.3h0M464.1 196.8h0M466.8 196.8h0M469.5 196.8h0M472.2 196.8h0M474.9 198.3h0M477.6 198.3h0M480.3 198.3h0M483 199.8h0M485.7 199.8h0M488.4 199.8h0M491.1 199.8h0M493.8 199.8h0M496.5 201.3h0M499.2 201.3h0M501.9 201.3h0M504.6 201.3h0M507.3 201.3h0M510 202.8h0M512.7 202.8h0M515.4 202.8h0M518.1 202.8h0M520.8 202.8h0M523.5 204.3h0M526.2 204.3h0M528.9 204.3h0M531.6 204.3h0M534.3 204.3h0M537 204.3h0M539.7 205.8h0M542.4 205.8h0M545.1 205.8h0M547.8 205.8h0M550.5 205.8h0M553.2 205.8h0M555.9 205.8h0M558.6 205.8h0M561.3 207.3h0M564 207.3h0M566.7 208.8h0M569.4 208.8h0M572.1 207.3h0M574.8 208.8h0M577.5 210.3h0M580.2 210.3h0M582.9 210.3h0M585.6 210.3h0M588.3 210.3h0M591 210.3h0M593.7 210.3h0M596.4 210.3h0M599.1 210.3h0M601.8 210.3h0M604.5 210.3h0M607.2 210.3h0M609.9 210.3h0M612.6 211.8h0M615.3 211.8h0M618 213.3h0M620.7 213.3h0M623.4 213.3h0M626.1 213.3h0M628.8 213.3h0M631.5 213.3h0M634.2 213.3h0M636.9 213.3h0M639.6 213.3h0M642.3 213.3h0M645 213.3h0M647.7 213.3h0M650.4 213.3h0M653.1 213.3h0M655.8 213.3h0M658.5 213.3h0M661.2 214.8h0M663.9 214.8h0M666.6 214.8h0M669.3 214.8h0M672 214.8h0M674.7 214.8h0M677.4 214.8h0M680.1 214.8h0M682.8 216.3h0M685.5 216.3h0M688.2 214.8h0M690.9 214.8h0M693.6 214.8h0M696.3 214.8h0M699 214.8h0M701.7 214.8h0M704.4 216.3h0M707.1 216.3h0M709.8 217.8h0M712.5 217.8h0M715.2 217.8h0M717.9 217.8h0M720.6 217.8h0M723.3 217.8h0M726 217.8h0M728.7 217.8h0M731.4 217.8h0M734.1 217.8h0M736.8 217.8h0M739.5 217.8h0M742.2 217.8h0M744.9 217.8h0M747.6 217.8h0M750.3 217.8h0M753 217.8h0M755.7 217.8h0M758.4 217.8h0M761.1 217.8h0M763.8 219.3h0M766.5 219.3h0M769.2 219.3h0M771.9 219.3h0M774.6 219.3h0M777.3 219.3h0M780 219.3h0M782.7 219.3h0M785.4 219.3h0M788.1 219.3h0M790.8 219.3h0M793.5 219.3h0M796.2 219.3h0M798.9 220.8h0M801.6 220.8h0M804.3 220.8h0M807 220.8h0M809.7 220.8h0M812.4 220.8h0M815.1 222.3h0M817.8 222.3h0M820.5 220.8h0M823.2 219.3h0M825.9 217.8h0M828.6 216.3h0M831.3 214.8h0M834 214.8h0M836.7 214.8h0M839.4 213.3h0M842.1 213.3h0M844.8 213.3h0M847.5 211.8h0M850.2 211.8h0M852.9 211.8h0M855.6 210.3h0M858.3 210.3h0M861 208.8h0M863.7 208.8h0M866.4 208.8h0M869.1 207.3h0" stroke="#edb120" stroke-width="3.1" stroke-linecap="round"/>
</g>
<path d="M60.5 119 V767 M60 766.5 H872" stroke="#262626" stroke-width="1" fill="none"/>
<path d="M61 766 H475.2" stroke="#0072bd" stroke-width="2"/>
<g stroke="#d4008c" stroke-width="1.3" fill="none">
<path transform="translate(194.4,766)" d="M-4.5 0H4.5M0 -4.5V4.5M-3.2 -3.2L3.2 3.2M-3.2 3.2L3.2 -3.2"/>
<path transform="translate(329.4,766)" d="M-4.5 0H4.5M0 -4.5V4.5M-3.2 -3.2L3.2 3.2M-3.2 3.2L3.2 -3.2"/>
<path transform="translate(464.4,766)" d="M-4.5 0H4.5M0 -4.5V4.5M-3.2 -3.2L3.2 3.2M-3.2 3.2L3.2 -3.2"/>
<path transform="translate(599.4,235.9)" d="M-4.5 0H4.5M0 -4.5V4.5M-3.2 -3.2L3.2 3.2M-3.2 3.2L3.2 -3.2"/>
<path transform="translate(734.4,248.8)" d="M-4.5 0H4.5M0 -4.5V4.5M-3.2 -3.2L3.2 3.2M-3.2 3.2L3.2 -3.2"/>
<path transform="translate(869.4,158.3)" d="M-4.5 0H4.5M0 -4.5V4.5M-3.2 -3.2L3.2 3.2M-3.2 3.2L3.2 -3.2"/>
</g>
<!-- status bar -->
<rect x="1" y="819" width="1200" height="1" fill="#a4a4a4"/>
<rect x="1" y="820" width="1200" height="22" fill="#e6e6e6"/>
<path d="M1186 825 L1192.5 831 L1186 837 Z" fill="#999"/>
<rect x="1193" y="825" width="2.5" height="12" fill="#999"/>
<!-- window border -->
<rect x="0.5" y="0.5" width="1201" height="842" fill="none" stroke="#acacac"/>

</svg>
</body></html>
